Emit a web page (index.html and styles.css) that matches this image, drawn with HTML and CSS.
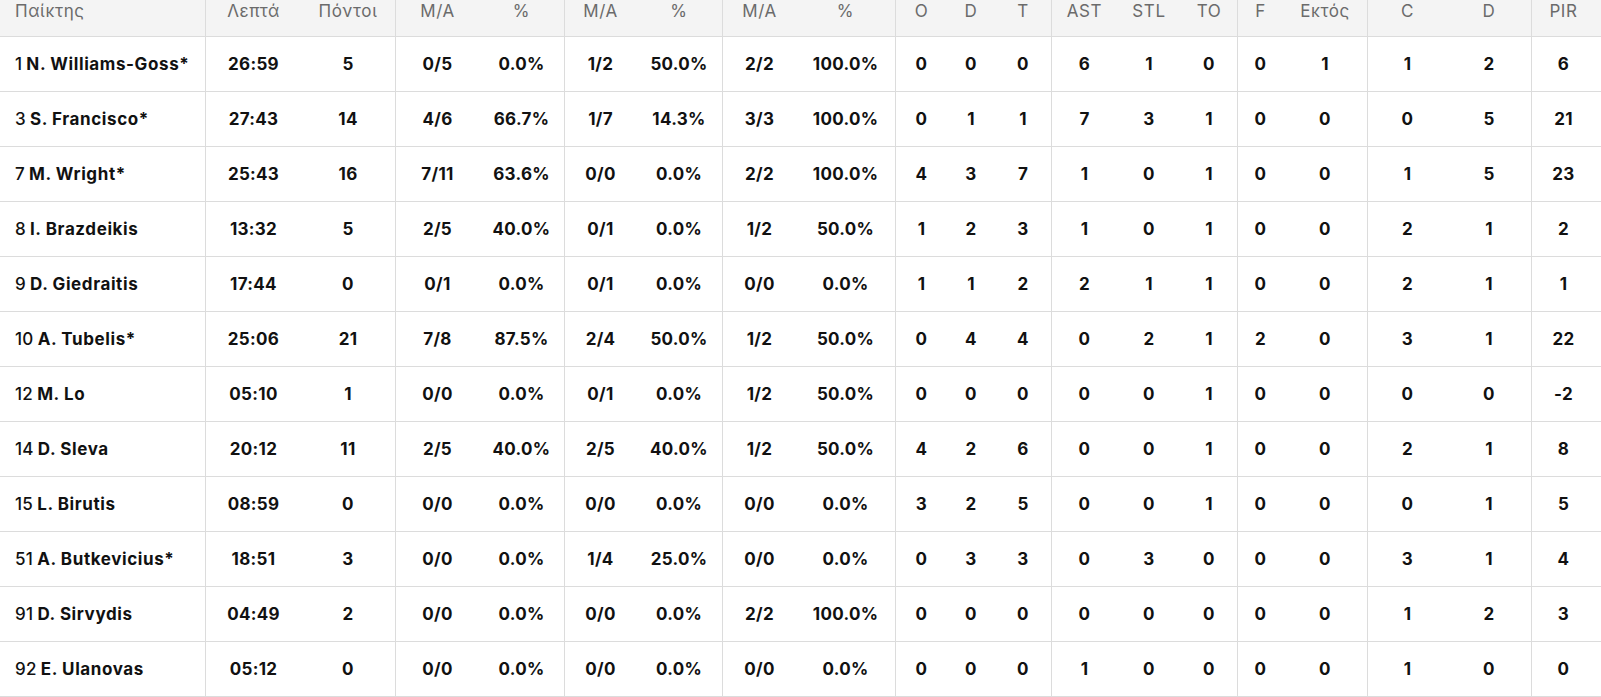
FILE: index.html
```html
<!DOCTYPE html>
<html lang="el">
<head>
<meta charset="utf-8">
<title>Box score</title>
<link rel="stylesheet" href="styles.css">
</head>
<body>
<div class="box">
  <div class="row head">
    <div class="c name">Παίκτης</div><div class="c">Λεπτά</div><div class="c">Πόντοι</div>
    <div class="c">M/A</div><div class="c">%</div><div class="c">M/A</div><div class="c">%</div><div class="c">M/A</div><div class="c">%</div>
    <div class="c">O</div><div class="c">D</div><div class="c">T</div>
    <div class="c">AST</div><div class="c">STL</div><div class="c">TO</div>
    <div class="c">F</div><div class="c">Εκτός</div>
    <div class="c">C</div><div class="c">D</div><div class="c">PIR</div>
  </div>
  <div class="row">
    <div class="c name"><span class="num">1</span> <b>N. Williams-Goss*</b></div><div class="c">26:59</div><div class="c">5</div>
    <div class="c">0/5</div><div class="c">0.0%</div><div class="c">1/2</div><div class="c">50.0%</div><div class="c">2/2</div><div class="c">100.0%</div>
    <div class="c">0</div><div class="c">0</div><div class="c">0</div><div class="c">6</div><div class="c">1</div><div class="c">0</div>
    <div class="c">0</div><div class="c">1</div><div class="c">1</div><div class="c">2</div><div class="c">6</div>
  </div>
  <div class="row">
    <div class="c name"><span class="num">3</span> <b>S. Francisco*</b></div><div class="c">27:43</div><div class="c">14</div>
    <div class="c">4/6</div><div class="c">66.7%</div><div class="c">1/7</div><div class="c">14.3%</div><div class="c">3/3</div><div class="c">100.0%</div>
    <div class="c">0</div><div class="c">1</div><div class="c">1</div><div class="c">7</div><div class="c">3</div><div class="c">1</div>
    <div class="c">0</div><div class="c">0</div><div class="c">0</div><div class="c">5</div><div class="c">21</div>
  </div>
  <div class="row">
    <div class="c name"><span class="num">7</span> <b>M. Wright*</b></div><div class="c">25:43</div><div class="c">16</div>
    <div class="c">7/11</div><div class="c">63.6%</div><div class="c">0/0</div><div class="c">0.0%</div><div class="c">2/2</div><div class="c">100.0%</div>
    <div class="c">4</div><div class="c">3</div><div class="c">7</div><div class="c">1</div><div class="c">0</div><div class="c">1</div>
    <div class="c">0</div><div class="c">0</div><div class="c">1</div><div class="c">5</div><div class="c">23</div>
  </div>
  <div class="row">
    <div class="c name"><span class="num">8</span> <b>I. Brazdeikis</b></div><div class="c">13:32</div><div class="c">5</div>
    <div class="c">2/5</div><div class="c">40.0%</div><div class="c">0/1</div><div class="c">0.0%</div><div class="c">1/2</div><div class="c">50.0%</div>
    <div class="c">1</div><div class="c">2</div><div class="c">3</div><div class="c">1</div><div class="c">0</div><div class="c">1</div>
    <div class="c">0</div><div class="c">0</div><div class="c">2</div><div class="c">1</div><div class="c">2</div>
  </div>
  <div class="row">
    <div class="c name"><span class="num">9</span> <b>D. Giedraitis</b></div><div class="c">17:44</div><div class="c">0</div>
    <div class="c">0/1</div><div class="c">0.0%</div><div class="c">0/1</div><div class="c">0.0%</div><div class="c">0/0</div><div class="c">0.0%</div>
    <div class="c">1</div><div class="c">1</div><div class="c">2</div><div class="c">2</div><div class="c">1</div><div class="c">1</div>
    <div class="c">0</div><div class="c">0</div><div class="c">2</div><div class="c">1</div><div class="c">1</div>
  </div>
  <div class="row">
    <div class="c name"><span class="num">10</span> <b>A. Tubelis*</b></div><div class="c">25:06</div><div class="c">21</div>
    <div class="c">7/8</div><div class="c">87.5%</div><div class="c">2/4</div><div class="c">50.0%</div><div class="c">1/2</div><div class="c">50.0%</div>
    <div class="c">0</div><div class="c">4</div><div class="c">4</div><div class="c">0</div><div class="c">2</div><div class="c">1</div>
    <div class="c">2</div><div class="c">0</div><div class="c">3</div><div class="c">1</div><div class="c">22</div>
  </div>
  <div class="row">
    <div class="c name"><span class="num">12</span> <b>M. Lo</b></div><div class="c">05:10</div><div class="c">1</div>
    <div class="c">0/0</div><div class="c">0.0%</div><div class="c">0/1</div><div class="c">0.0%</div><div class="c">1/2</div><div class="c">50.0%</div>
    <div class="c">0</div><div class="c">0</div><div class="c">0</div><div class="c">0</div><div class="c">0</div><div class="c">1</div>
    <div class="c">0</div><div class="c">0</div><div class="c">0</div><div class="c">0</div><div class="c">-2</div>
  </div>
  <div class="row">
    <div class="c name"><span class="num">14</span> <b>D. Sleva</b></div><div class="c">20:12</div><div class="c">11</div>
    <div class="c">2/5</div><div class="c">40.0%</div><div class="c">2/5</div><div class="c">40.0%</div><div class="c">1/2</div><div class="c">50.0%</div>
    <div class="c">4</div><div class="c">2</div><div class="c">6</div><div class="c">0</div><div class="c">0</div><div class="c">1</div>
    <div class="c">0</div><div class="c">0</div><div class="c">2</div><div class="c">1</div><div class="c">8</div>
  </div>
  <div class="row">
    <div class="c name"><span class="num">15</span> <b>L. Birutis</b></div><div class="c">08:59</div><div class="c">0</div>
    <div class="c">0/0</div><div class="c">0.0%</div><div class="c">0/0</div><div class="c">0.0%</div><div class="c">0/0</div><div class="c">0.0%</div>
    <div class="c">3</div><div class="c">2</div><div class="c">5</div><div class="c">0</div><div class="c">0</div><div class="c">1</div>
    <div class="c">0</div><div class="c">0</div><div class="c">0</div><div class="c">1</div><div class="c">5</div>
  </div>
  <div class="row">
    <div class="c name"><span class="num">51</span> <b>A. Butkevicius*</b></div><div class="c">18:51</div><div class="c">3</div>
    <div class="c">0/0</div><div class="c">0.0%</div><div class="c">1/4</div><div class="c">25.0%</div><div class="c">0/0</div><div class="c">0.0%</div>
    <div class="c">0</div><div class="c">3</div><div class="c">3</div><div class="c">0</div><div class="c">3</div><div class="c">0</div>
    <div class="c">0</div><div class="c">0</div><div class="c">3</div><div class="c">1</div><div class="c">4</div>
  </div>
  <div class="row">
    <div class="c name"><span class="num">91</span> <b>D. Sirvydis</b></div><div class="c">04:49</div><div class="c">2</div>
    <div class="c">0/0</div><div class="c">0.0%</div><div class="c">0/0</div><div class="c">0.0%</div><div class="c">2/2</div><div class="c">100.0%</div>
    <div class="c">0</div><div class="c">0</div><div class="c">0</div><div class="c">0</div><div class="c">0</div><div class="c">0</div>
    <div class="c">0</div><div class="c">0</div><div class="c">1</div><div class="c">2</div><div class="c">3</div>
  </div>
  <div class="row">
    <div class="c name"><span class="num">92</span> <b>E. Ulanovas</b></div><div class="c">05:12</div><div class="c">0</div>
    <div class="c">0/0</div><div class="c">0.0%</div><div class="c">0/0</div><div class="c">0.0%</div><div class="c">0/0</div><div class="c">0.0%</div>
    <div class="c">0</div><div class="c">0</div><div class="c">0</div><div class="c">1</div><div class="c">0</div><div class="c">0</div>
    <div class="c">0</div><div class="c">0</div><div class="c">1</div><div class="c">0</div><div class="c">0</div>
  </div>
</div>
</body>
</html>
```

FILE: styles.css
```css
* { box-sizing: border-box; }
html, body { margin: 0; padding: 0; background: #fff; }
body {
  font-family: "Inter", "Open Sans", sans-serif;
  color: #111;
  overflow: hidden;
}
.box { width: 1601px; }
.row {
  display: grid;
  grid-template-columns: 205px 96px 94px 84px 85px 72px 86px 74px 99px 52px 48px 56px 66px 64px 56px 46px 84px 80px 84px 70px;
  height: 55px;
  border-bottom: 1px solid #dcdcdc;
  font-size: 17px;
  font-weight: 700;
  letter-spacing: 0.3px;
}
.row.head {
  height: 37px;
  background: #f4f4f4;
  font-weight: 400;
  font-size: 17px;
  letter-spacing: 0.6px;
  color: #6b6b6b;
}
.c {
  display: flex;
  align-items: center;
  justify-content: center;
  white-space: nowrap;
}
.head .c { align-items: flex-start; line-height: 20px; padding-top: 1px; }
.c.name { justify-content: flex-start; padding-left: 15px; }
.c:nth-child(2), .c:nth-child(4), .c:nth-child(6), .c:nth-child(8), .c:nth-child(10),
.c:nth-child(13), .c:nth-child(16), .c:nth-child(18), .c:nth-child(20) {
  border-left: 1px solid #dcdcdc;
}
.c:nth-child(20) { padding-right: 6px; }
.num { font-weight: 500; margin-right: 4px; }
.c.name b { font-weight: 700; letter-spacing: 0.6px; }
```
